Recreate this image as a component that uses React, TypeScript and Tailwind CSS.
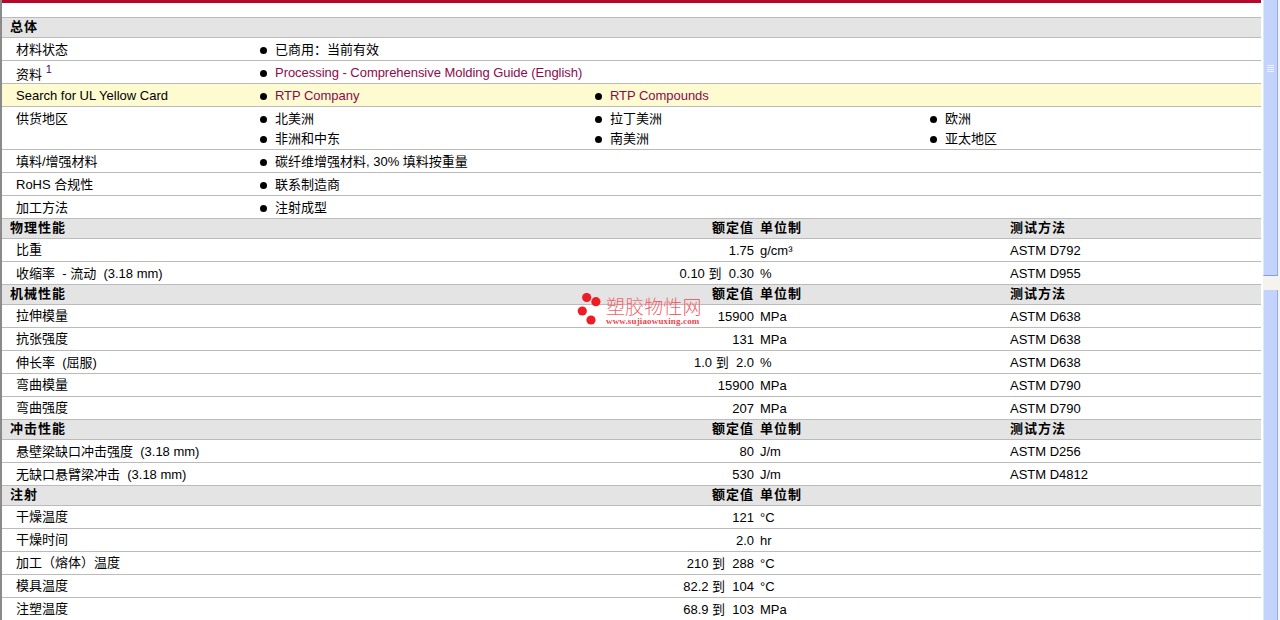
const font = "font-['Liberation_Sans','Noto_Sans_CJK_SC',sans-serif]"

function Bullet({ children, link }: { children: React.ReactNode; link?: boolean }) {
  return (
    <div className="flex h-5 items-center">
      <span className="h-[7px] w-[7px] shrink-0 rounded-full bg-black" />
      <span className={link ? 'ml-2 whitespace-nowrap tracking-[-0.04px] text-[#8c0a4c]' : 'ml-2 whitespace-nowrap'}>{children}</span>
    </div>
  )
}

function InfoRow({ label, items, link, yellow, tall }: { label: React.ReactNode; items: string[]; link?: boolean; yellow?: boolean; tall?: boolean }) {
  return (
    <div className={`flex border-b border-[#bbbbbb] pt-[2px] pl-[14px] ${tall ? 'h-[43px]' : 'h-[23px]'} ${yellow ? 'bg-[#fffbd0]' : ''}`}>
      <div className="h-5 w-[244px] shrink-0 leading-5">{label}</div>
      <div className="grid flex-1 grid-cols-[335px_335px_1fr]">
        {items.map((t) => (
          <Bullet key={t} link={link}>{t}</Bullet>
        ))}
      </div>
    </div>
  )
}

function Head({ title, cols = true, method = true }: { title: string; cols?: boolean; method?: boolean }) {
  return (
    <div className="flex h-[20px] items-center border-b border-[#bbbbbb] bg-[#e4e4e4] pb-[2px] pl-2 font-bold tracking-[1px]">
      <div className="w-[694px] shrink-0">{title}</div>
      {cols && <div className="w-[50px] shrink-0 text-right">额定值</div>}
      {cols && <div className="ml-[6px] w-[250px] shrink-0">单位制</div>}
      {cols && method && <div>测试方法</div>}
    </div>
  )
}

function DataRow({ label, value, unit, method, latin }: { label: string; value: string; unit: string; method?: string; latin?: boolean }) {
  return (
    <div className="flex h-[23px] items-center border-b border-[#bbbbbb] pl-[14px]">
      <div className={`w-[538px] shrink-0 whitespace-pre ${latin ? 'pt-[2px]' : ''}`}>{label}</div>
      <div className="w-[200px] shrink-0 pt-[2px] text-right whitespace-pre">{value}</div>
      <div className="ml-[6px] w-[250px] shrink-0 pt-[2px]">{unit}</div>
      <div className="pt-[2px]">{method}</div>
    </div>
  )
}

function Scrollbar() {
  return (
    <div className="flex w-[17px] shrink-0 flex-col bg-[#f4f3ee] pr-[2px]">
      <div className="flex h-[276px] justify-center border-r border-b border-l border-r-[#8fa9ea] border-b-[#7f9ee8] border-l-[#dfe7fd] bg-[#c3d3fc] pt-[65px]">
        <div className="flex flex-col gap-[1px]">
          <div className="h-[1px] w-[7px] bg-[#eef3ff]" />
          <div className="h-[1px] w-[7px] bg-[#eef3ff]" />
          <div className="h-[1px] w-[7px] bg-[#eef3ff]" />
          <div className="h-[1px] w-[7px] bg-[#eef3ff]" />
        </div>
      </div>
      <div className="h-[14px]" />
      <div className="flex-1 border-r border-l border-r-[#8fa9ea] border-l-[#dfe7fd] bg-[#c3d3fc]" />
    </div>
  )
}

export default function App() {
  return (
    <div className={`${font} relative flex h-[620px] w-[1280px] overflow-hidden bg-white text-[13px] text-black`}>
      <div className="w-[2px] shrink-0 bg-[#8a8a8a]" />
      <div className="w-[1259px] shrink-0">
        <div className="h-[3px] bg-[#b5082a]" />
        <div className="h-[14px]" />
        <div className="border-t border-[#bbbbbb]" />
        <Head title="总体" cols={false} />
        <InfoRow label="材料状态" items={['已商用：当前有效']} />
        <InfoRow label={<span className="block pt-[2px]">资料 <span className="relative -top-[6px] text-[11px] text-[#3a0a70]">1</span></span>} items={['Processing - Comprehensive Molding Guide (English)']} link />
        <InfoRow label="Search for UL Yellow Card" items={['RTP Company', 'RTP Compounds']} link yellow />
        <InfoRow label="供货地区" items={['北美洲', '拉丁美洲', '欧洲', '非洲和中东', '南美洲', '亚太地区']} tall />
        <InfoRow label="填料/增强材料" items={['碳纤维增强材料, 30% 填料按重量']} />
        <InfoRow label="RoHS 合规性" items={['联系制造商']} />
        <InfoRow label="加工方法" items={['注射成型']} />
        <Head title="物理性能" />
        <DataRow label="比重" value="1.75" unit="g/cm³" method="ASTM D792" />
        <DataRow label="收缩率  - 流动  (3.18 mm)" value="0.10 到  0.30" unit="%" method="ASTM D955" latin />
        <Head title="机械性能" />
        <DataRow label="拉伸模量" value="15900" unit="MPa" method="ASTM D638" />
        <DataRow label="抗张强度" value="131" unit="MPa" method="ASTM D638" />
        <DataRow label="伸长率  (屈服)" value="1.0 到  2.0" unit="%" method="ASTM D638" latin />
        <DataRow label="弯曲模量" value="15900" unit="MPa" method="ASTM D790" />
        <DataRow label="弯曲强度" value="207" unit="MPa" method="ASTM D790" />
        <Head title="冲击性能" />
        <DataRow label="悬壁梁缺口冲击强度  (3.18 mm)" value="80" unit="J/m" method="ASTM D256" latin />
        <DataRow label="无缺口悬臂梁冲击  (3.18 mm)" value="530" unit="J/m" method="ASTM D4812" latin />
        <Head title="注射" method={false} />
        <DataRow label="干燥温度" value="121" unit="°C" />
        <DataRow label="干燥时间" value="2.0" unit="hr" />
        <DataRow label="加工（熔体）温度" value="210 到  288" unit="°C" />
        <DataRow label="模具温度" value="82.2 到  104" unit="°C" />
        <DataRow label="注塑温度" value="68.9 到  103" unit="MPa" />
      </div>
      <div className="w-[2px] shrink-0" />
      <Scrollbar />

      {/* watermark */}
      <div className="absolute left-[577px] top-[293px] flex items-start">
        <svg width="28" height="33" viewBox="0 0 28 33" className="shrink-0">
          <circle cx="9.7" cy="4.5" r="4.6" fill="#ee1c25" />
          <circle cx="18.9" cy="8.7" r="4.6" fill="#ee1c25" />
          <circle cx="5.3" cy="18" r="4.6" fill="#ee1c25" />
          <circle cx="14" cy="27" r="4.6" fill="#ee1c25" />
        </svg>
        <div className="ml-[1px] flex flex-col pt-[3px]">
          <div className="text-[19px] leading-[20px] tracking-[0.1px] text-[#f0656b] font-['Noto_Sans_CJK_SC',sans-serif] font-light">塑胶物性网</div>
          <div className="text-[9px] leading-[10px] tracking-[0.15px] font-bold text-[#f0444c] font-['Liberation_Serif',serif]">www.sujiaowuxing.com</div>
        </div>
      </div>
    </div>
  )
}
